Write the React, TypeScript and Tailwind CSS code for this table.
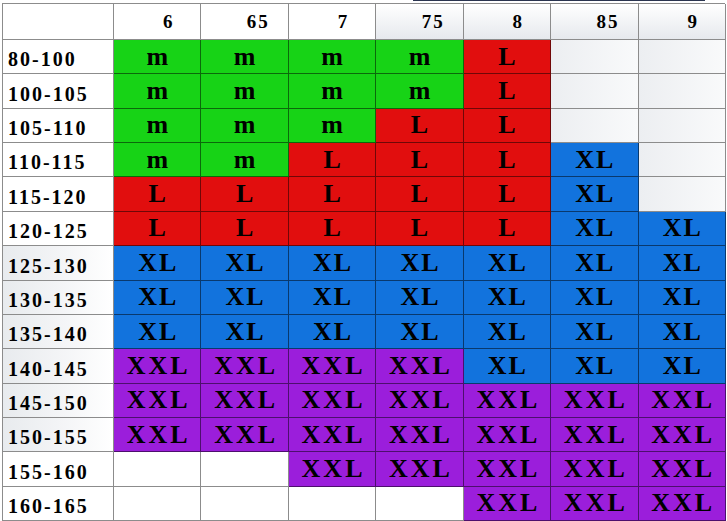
// Size chart - weight ranges vs height columns, coloured by size
import React from "react";

const heights = ["6", "65", "7", "75", "8", "85", "9"];

const rows: { label: string; sizes: string[] }[] = [
  { label: "80-100", sizes: ["m", "m", "m", "m", "L", "", ""] },
  { label: "100-105", sizes: ["m", "m", "m", "m", "L", "", ""] },
  { label: "105-110", sizes: ["m", "m", "m", "L", "L", "", ""] },
  { label: "110-115", sizes: ["m", "m", "L", "L", "L", "XL", ""] },
  { label: "115-120", sizes: ["L", "L", "L", "L", "L", "XL", ""] },
  { label: "120-125", sizes: ["L", "L", "L", "L", "L", "XL", "XL"] },
  { label: "125-130", sizes: ["XL", "XL", "XL", "XL", "XL", "XL", "XL"] },
  { label: "130-135", sizes: ["XL", "XL", "XL", "XL", "XL", "XL", "XL"] },
  { label: "135-140", sizes: ["XL", "XL", "XL", "XL", "XL", "XL", "XL"] },
  { label: "140-145", sizes: ["XXL", "XXL", "XXL", "XXL", "XL", "XL", "XL"] },
  { label: "145-150", sizes: ["XXL", "XXL", "XXL", "XXL", "XXL", "XXL", "XXL"] },
  { label: "150-155", sizes: ["XXL", "XXL", "XXL", "XXL", "XXL", "XXL", "XXL"] },
  { label: "155-160", sizes: ["", "", "XXL", "XXL", "XXL", "XXL", "XXL"] },
  { label: "160-165", sizes: ["", "", "", "", "XXL", "XXL", "XXL"] },
];

const sizeBg: Record<string, string> = {
  m: "bg-[#17d316] border-black/50",
  L: "bg-[#e10e0e] border-black/50",
  XL: "bg-[#1273dd] border-black/50",
  XXL: "bg-[#9b1edb] border-black/50",
};

// empty cells in the upper right sit on the light grey watermark
const emptyBg = (row: number, col: number) =>
  row < 6 && col >= 5 ? "bg-gradient-to-r from-[#eceef1] to-[#f9fafb]" : "bg-white";

const App: React.FC = () => {
  return (
    <div className="w-[727px] h-[521px] bg-white font-['Liberation_Serif',serif] text-black overflow-hidden">
      <div className="h-[3px]">
        <div className="ml-[413px] w-[292px] h-px bg-[#2b3550]" />
      </div>
      <div className="ml-[2px] w-[723px] grid grid-cols-[111px_repeat(7,87.43px)] grid-rows-[36px_repeat(14,34.36px)] border-l border-t border-[#8c8c8c]">
        {/* Header row */}
        <div className="border-r border-b border-[#8c8c8c] bg-white" />
        {heights.map((h, i) => (
          <div
            key={h}
            className={`flex items-center justify-end border-r border-b border-[#8c8c8c] text-[19px] font-bold tracking-[2px] pt-[2px] ${
              h.length === 1 ? "pr-[26px]" : "pr-[18px]"
            } ${i >= 3 ? "bg-gradient-to-b from-white to-[#e6e9ed]" : "bg-white"}`}
          >
            {h}
          </div>
        ))}

        {/* Body rows */}
        {rows.map((row, r) => (
          <React.Fragment key={row.label}>
            <div
              className={`flex items-end pb-[4px] pl-[5px] border-r border-b border-[#8c8c8c] text-[20px] font-bold tracking-[2px] leading-none ${
                r >= 6 && r <= 11 ? "bg-gradient-to-r from-[#e8ebee] via-[#f3f4f6] to-white" : "bg-white"
              }`}
            >
              {row.label}
            </div>
            {row.sizes.map((s, c) => (
              <div
                key={c}
                className={`flex items-center justify-center border-r border-b text-[26px] font-bold leading-none ${
                  s === "XXL" ? "tracking-[3px] pl-[3px]" : s === "XL" ? "tracking-[2px] pl-[2px]" : ""
                } ${s ? sizeBg[s] : `${emptyBg(r, c)} border-[#8c8c8c]`}`}
              >
                {s}
              </div>
            ))}
          </React.Fragment>
        ))}
      </div>
    </div>
  );
};

export default App;
